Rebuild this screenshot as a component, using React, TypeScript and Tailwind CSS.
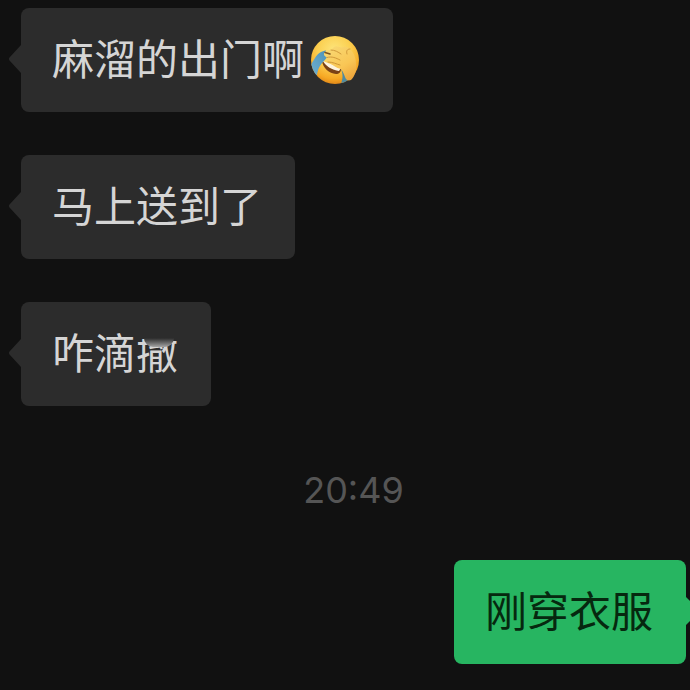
import React from "react";

type Message = {
  text: string;
  facepalm?: boolean;
  fadedLast?: string;
};

const received: Message[] = [
  { text: "麻溜的出门啊", facepalm: true },
  { text: "马上送到了" },
  { text: "咋滴", fadedLast: "撤" },
];

function FacepalmEmoji() {
  return (
    <svg
      className="ml-1 h-[52px] w-[52px] shrink-0"
      viewBox="0 0 52 52"
      role="img"
      aria-label="捂脸"
    >
      <defs>
        <radialGradient id="face" cx="0.48" cy="0.3" r="0.74">
          <stop offset="0" stopColor="#fde57c" />
          <stop offset="0.45" stopColor="#fbd052" />
          <stop offset="0.8" stopColor="#f6a824" />
          <stop offset="1" stopColor="#d97c14" />
        </radialGradient>
        <linearGradient id="hand" x1="0.2" y1="0" x2="0.8" y2="1">
          <stop offset="0" stopColor="#f8d873" />
          <stop offset="0.6" stopColor="#f9c655" />
          <stop offset="1" stopColor="#eda43a" />
        </linearGradient>
        <linearGradient id="tear" x1="1" y1="0" x2="0" y2="1">
          <stop offset="0" stopColor="#4f93b8" />
          <stop offset="1" stopColor="#6fb0d2" />
        </linearGradient>
        <clipPath id="faceClip">
          <circle cx="27" cy="26" r="24" />
        </clipPath>
      </defs>
      <circle cx="27" cy="26" r="24" fill="url(#face)" />
      <g clipPath="url(#faceClip)">
        {/* Mouth */}
        <path d="M14 27C15 34 21 39.500 28 40C31 40 33 38 33 35Z" fill="#7a4216" />
        <path d="M15 27L33 34L31 37C24 36 18 32.500 15 27Z" fill="#fdf3df" />
        {/* Tears */}
        <path
          d="M18 16.500C14 17 10 19 7 24L2 32V40L9 41C10 34 13 29 19 24Z"
          fill="url(#tear)"
        />
        <path d="M33 35C35 40 35 44 33 50L40 49L39 40Z" fill="#4f8ba0" />
      </g>
      {/* Hand */}
      <path
        d="M17 18C18 16 21 16 23 16L26 13C28 11 31 13 34 13.500C37 12 40 13 42 15C46 19 48 24 48 30C49 36 47 42 43 46C40 47 38 46 37 43C36 40 35 38 33 35C28 34 25 31 20 28C17 27 17 25 19 23.500C16 22 15 20 17 18Z"
        fill="url(#hand)"
      />
      <g
        fill="none"
        stroke="#c08329"
        strokeWidth="1"
        strokeLinecap="round"
        opacity="0.7"
      >
        <path d="M23 16C27 16 30 18 33 20" />
        <path d="M19 23.500C24 22 28 24 32 26" />
        <path d="M20 28C25 28 28 30 32 31" />
        <path d="M42 15C39 15 38 17 39 20" />
      </g>
      <path
        d="M17 18.500L22 20"
        stroke="#7d5522"
        strokeWidth="1.500"
        strokeLinecap="round"
      />
    </svg>
  );
}

function ReceivedBubble({ message }: { message: Message }) {
  return (
    <div className="relative flex h-[104px] items-center rounded-lg bg-[#2c2c2c] pr-[33px] pl-[31px] text-[42px] leading-none text-[#d5d5d5]">
      <svg
        className="absolute top-[37px] right-full h-[28px] w-[13px] text-[#2c2c2c]"
        viewBox="0 0 13 28"
        fill="currentColor"
        aria-hidden="true"
      >
        <path d="M13 0V28L1.500 15.500Q0 14 1.500 12.500Z" />
      </svg>
      <p className="pb-[6px] whitespace-nowrap">
        {message.text}
        {message.fadedLast && (
          <span className="relative inline-block">
            {message.fadedLast}
            <span className="absolute inset-x-0 top-0 h-[9px] bg-[#2c2c2c]" />
            <span className="absolute top-[8px] right-1 left-2 h-[9px] rounded-b-full bg-linear-to-b from-[#2c2c2c] to-[#a5a5a5]" />
          </span>
        )}
      </p>
      {message.facepalm && <FacepalmEmoji />}
    </div>
  );
}

export default function App() {
  return (
    <main className="min-h-screen bg-[#111111] pt-2 pr-1 pb-6 pl-[21px] font-['Noto_Sans_CJK_SC',sans-serif]">
      <div className="flex flex-col items-start gap-[43px]">
        {received.map((message) => (
          <ReceivedBubble key={message.text} message={message} />
        ))}
      </div>

      <time className="mt-16 block text-center font-['Inter',sans-serif] text-4xl text-[#555555]">
        20:49
      </time>

      <div className="mt-[50px] flex justify-end">
        <div className="relative flex h-[104px] items-center rounded-lg bg-[#27b561] pr-[33px] pl-[31px] text-[42px] leading-none text-[#06280f]">
          <p className="pb-[6px] whitespace-nowrap">刚穿衣服</p>
          <svg
            className="absolute top-[37px] left-full h-[28px] w-1 text-[#27b561]"
            viewBox="0 0 4 28"
            fill="currentColor"
            aria-hidden="true"
          >
            <path d="M0 0L4 4V24L0 28Z" />
          </svg>
        </div>
      </div>
    </main>
  );
}
